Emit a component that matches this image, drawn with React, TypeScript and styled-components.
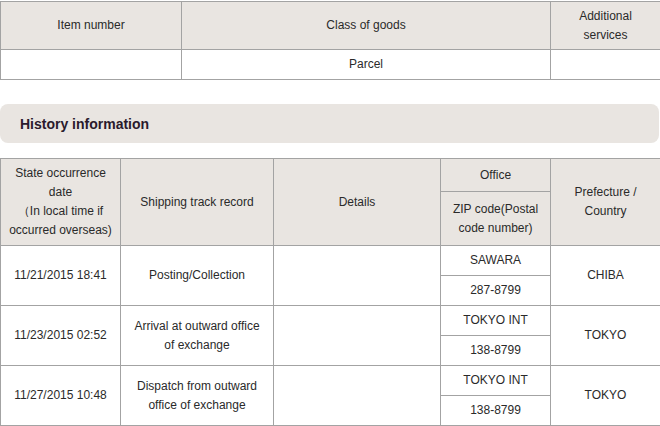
import React from 'react';
import styled, { createGlobalStyle } from 'styled-components';

type Event = {
  date: string;
  record: React.ReactNode;
  details: string;
  office: string;
  zip: string;
  region: string;
};

const events: Event[] = [
  {
    date: '11/21/2015 18:41',
    record: 'Posting/Collection',
    details: '',
    office: 'SAWARA',
    zip: '287-8799',
    region: 'CHIBA',
  },
  {
    date: '11/23/2015 02:52',
    record: (
      <>
        Arrival at outward office
        <br />
        of exchange
      </>
    ),
    details: '',
    office: 'TOKYO INT',
    zip: '138-8799',
    region: 'TOKYO',
  },
  {
    date: '11/27/2015 10:48',
    record: (
      <>
        Dispatch from outward
        <br />
        office of exchange
      </>
    ),
    details: '',
    office: 'TOKYO INT',
    zip: '138-8799',
    region: 'TOKYO',
  },
];

const GlobalStyle = createGlobalStyle`
  body {
    margin: 0;
    background: #fff;
    font-family: "Liberation Sans", Arial, sans-serif;
    color: #2a2a2a;
  }
`;

const Page = styled.div`
  width: 660px;
  padding-top: 1px;
`;

const Table = styled.table`
  width: 660px;
  border-collapse: collapse;
  table-layout: fixed;
  font-size: 12px;
  line-height: 19px;
  color: #2a2a2a;
`;

const Row = styled.tr<{ $h: number }>`
  height: ${(p) => p.$h}px;
`;

const HeadCell = styled.th`
  background: #e9e5e1;
  border: 1px solid #a3a3a3;
  font-weight: normal;
  text-align: center;
  vertical-align: middle;
  padding: 0 4px;
`;

const Cell = styled.td`
  background: #fff;
  border: 1px solid #a3a3a3;
  text-align: center;
  vertical-align: middle;
  padding: 0 4px;
`;

const SectionBar = styled.div`
  margin: 24px 1px 15px 0;
  height: 39px;
  border-radius: 8px;
  background: #e9e5e1;
  display: flex;
  align-items: center;
  padding-left: 20px;
`;

const SectionTitle = styled.h2`
  margin: 0;
  font-size: 14px;
  font-weight: bold;
  color: #2a1a2c;
`;

export default function App() {
  return (
    <Page>
      <GlobalStyle />
      <Table>
        <colgroup>
          <col style={{ width: 181 }} />
          <col style={{ width: 369 }} />
          <col style={{ width: 110 }} />
        </colgroup>
        <thead>
          <Row $h={48}>
            <HeadCell>Item number</HeadCell>
            <HeadCell>Class of goods</HeadCell>
            <HeadCell>
              Additional
              <br />
              services
            </HeadCell>
          </Row>
        </thead>
        <tbody>
          <Row $h={30}>
            <Cell />
            <Cell>Parcel</Cell>
            <Cell />
          </Row>
        </tbody>
      </Table>

      <SectionBar>
        <SectionTitle>History information</SectionTitle>
      </SectionBar>

      <Table>
        <colgroup>
          <col style={{ width: 120 }} />
          <col style={{ width: 153 }} />
          <col style={{ width: 167 }} />
          <col style={{ width: 110 }} />
          <col style={{ width: 110 }} />
        </colgroup>
        <thead>
          <Row $h={33}>
            <HeadCell rowSpan={2}>
              State occurrence
              <br />
              date
              <br />
              （In local time if
              <br />
              occurred overseas)
            </HeadCell>
            <HeadCell rowSpan={2}>Shipping track record</HeadCell>
            <HeadCell rowSpan={2}>Details</HeadCell>
            <HeadCell>Office</HeadCell>
            <HeadCell rowSpan={2}>
              Prefecture /
              <br />
              Country
            </HeadCell>
          </Row>
          <Row $h={54}>
            <HeadCell>
              ZIP code(Postal
              <br />
              code number)
            </HeadCell>
          </Row>
        </thead>
        <tbody>
          {events.map((e, i) => (
            <React.Fragment key={i}>
              <Row $h={30}>
                <Cell rowSpan={2}>{e.date}</Cell>
                <Cell rowSpan={2}>{e.record}</Cell>
                <Cell rowSpan={2}>{e.details}</Cell>
                <Cell>{e.office}</Cell>
                <Cell rowSpan={2}>{e.region}</Cell>
              </Row>
              <Row $h={30}>
                <Cell>{e.zip}</Cell>
              </Row>
            </React.Fragment>
          ))}
        </tbody>
      </Table>
    </Page>
  );
}
